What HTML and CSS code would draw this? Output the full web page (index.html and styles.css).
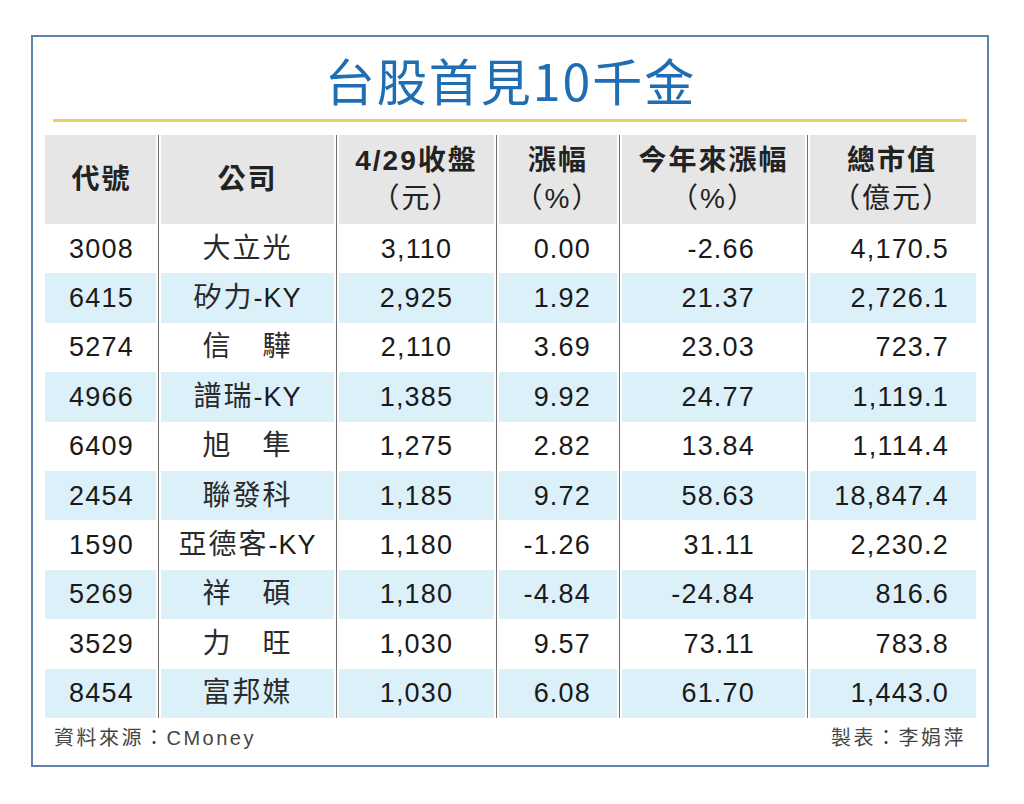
FILE: index.html
```html
<!DOCTYPE html>
<html lang="zh-Hant">
<head>
<meta charset="utf-8">
<title>台股首見10千金</title>
<link rel="stylesheet" href="styles.css">
</head>
<body>
<div class="card">
  <h1 class="title">台股首見10千金</h1>
  <div class="rule"></div>
  <table class="grid">
    <colgroup>
      <col class="c1"><col class="c2"><col class="c3"><col class="c4"><col class="c5"><col class="c6">
    </colgroup>
    <thead>
      <tr>
        <th>代號</th>
        <th>公司</th>
        <th>4/29收盤<br><span class="unit">（元）</span></th>
        <th>漲幅<br><span class="unit">（%）</span></th>
        <th>今年來漲幅<br><span class="unit">（%）</span></th>
        <th>總市值<br><span class="unit">（億元）</span></th>
      </tr>
    </thead>
    <tbody>
      <tr><td>3008</td><td class="name">大立光</td><td>3,110</td><td class="r4">0.00</td><td class="r5">-2.66</td><td class="r6">4,170.5</td></tr>
      <tr><td>6415</td><td class="name">矽力<span class="ky">-KY</span></td><td>2,925</td><td class="r4">1.92</td><td class="r5">21.37</td><td class="r6">2,726.1</td></tr>
      <tr><td>5274</td><td class="name">信　驊</td><td>2,110</td><td class="r4">3.69</td><td class="r5">23.03</td><td class="r6">723.7</td></tr>
      <tr><td>4966</td><td class="name">譜瑞<span class="ky">-KY</span></td><td>1,385</td><td class="r4">9.92</td><td class="r5">24.77</td><td class="r6">1,119.1</td></tr>
      <tr><td>6409</td><td class="name">旭　隼</td><td>1,275</td><td class="r4">2.82</td><td class="r5">13.84</td><td class="r6">1,114.4</td></tr>
      <tr><td>2454</td><td class="name">聯發科</td><td>1,185</td><td class="r4">9.72</td><td class="r5">58.63</td><td class="r6">18,847.4</td></tr>
      <tr><td>1590</td><td class="name">亞德客<span class="ky">-KY</span></td><td>1,180</td><td class="r4">-1.26</td><td class="r5">31.11</td><td class="r6">2,230.2</td></tr>
      <tr><td>5269</td><td class="name">祥　碩</td><td>1,180</td><td class="r4">-4.84</td><td class="r5">-24.84</td><td class="r6">816.6</td></tr>
      <tr><td>3529</td><td class="name">力　旺</td><td>1,030</td><td class="r4">9.57</td><td class="r5">73.11</td><td class="r6">783.8</td></tr>
      <tr><td>8454</td><td class="name">富邦媒</td><td>1,030</td><td class="r4">6.08</td><td class="r5">61.70</td><td class="r6">1,443.0</td></tr>
    </tbody>
  </table>
  <div class="foot">
    <span>資料來源：CMoney</span>
    <span>製表：李娟萍</span>
  </div>
</div>
</body>
</html>
```

FILE: styles.css
```css
html, body {
  margin: 0;
  padding: 0;
  background: #ffffff;
}

body {
  font-family: "Liberation Sans", "Noto Sans CJK TC", sans-serif;
  color: #1e1e1e;
  padding: 35px 0 0 31px;
}

.card {
  box-sizing: border-box;
  width: 958px;
  height: 732px;
  border: 2px solid #5f84ab;
  background: #ffffff;
  padding: 12px 11px 0 12px;
}

.title {
  margin: 0;
  height: 62px;
  line-height: 60px;
  text-align: center;
  font-family: "Noto Sans CJK TC", sans-serif;
  font-weight: 400;
  font-size: 50px;
  letter-spacing: 2px;
  color: #1f6db3;
}

.rule {
  height: 3px;
  background: #ecd066;
  margin: 8px 9px 0 8px;
}

.grid {
  margin-top: 13px;
  width: 931px;
  table-layout: fixed;
  border-collapse: separate;
  border-spacing: 0;
}

.c1 { width: 113px; }
.c2 { width: 178px; }
.c3 { width: 160px; }
.c4 { width: 123px; }
.c5 { width: 188px; }
.c6 { width: 169px; }

.grid th,
.grid td {
  padding: 0;
  text-align: center;
  vertical-align: middle;
  white-space: nowrap;
}

.grid th + th,
.grid td + td {
  border-left: 1px solid #6e6e6e;
  box-shadow: inset 2px 0 0 #ffffff;
}

.grid th:not(:last-child),
.grid td:not(:last-child) {
  box-shadow: inset -2px 0 0 #ffffff;
}

.grid th + th:not(:last-child),
.grid td + td:not(:last-child) {
  box-shadow: inset 2px 0 0 #ffffff, inset -2px 0 0 #ffffff;
}

.grid thead tr {
  height: 89px;
}

.grid th {
  background: #e6e6e6;
  font-size: 28px;
  font-weight: 700;
  letter-spacing: 2px;
  line-height: 38px;
  color: #222222;
}

.unit {
  font-weight: 400;
}

.grid tbody tr {
  height: 49.4px;
}

.grid tbody tr:nth-child(even) td {
  background: #dcf0fa;
}

.grid td {
  font-size: 27px;
  letter-spacing: 1.2px;
  line-height: 30px;
  color: #1a1a1a;
}

.grid td.name {
  font-size: 28px;
  letter-spacing: 2px;
  color: #2a2a2a;
}

.ky {
  font-size: 27px;
  letter-spacing: 1px;
  color: #1a1a1a;
}

.grid td.r4 { text-align: right; padding-right: 28px; }
.grid td.r5 { text-align: right; padding-right: 52px; }
.grid td.r6 { text-align: right; padding-right: 27px; }

.foot {
  display: flex;
  justify-content: space-between;
  padding: 8px 10px 0 9px;
  font-size: 20px;
  letter-spacing: 2.5px;
  line-height: 24px;
  color: #454545;
}
```
